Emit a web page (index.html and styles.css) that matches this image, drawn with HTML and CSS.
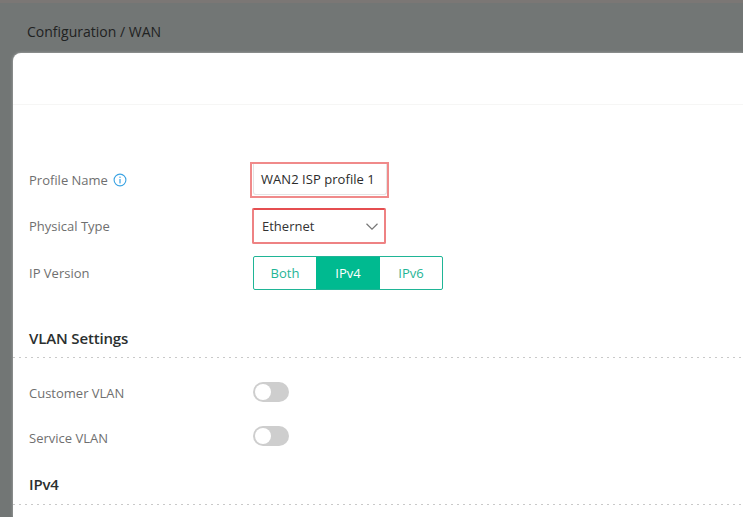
FILE: index.html
```html
<!DOCTYPE html>
<html lang="en">
<head>
<meta charset="utf-8">
<title>Configuration / WAN</title>
<link rel="stylesheet" href="styles.css">
</head>
<body>
<div class="topstrip"></div>
<div class="crumb">Configuration / WAN</div>
<main class="card">
  <div class="card-head"></div>
  <form class="form">
    <div class="row row-name">
      <div class="label">Profile Name
        <svg class="info" width="14" height="14" viewBox="0 0 14 14"><circle cx="7" cy="7" r="5.9" fill="none" stroke="#3aa3e3" stroke-width="1.1"/><rect x="6.4" y="6" width="1.2" height="4.4" fill="#3aa3e3"/><rect x="6.4" y="3.6" width="1.2" height="1.3" fill="#3aa3e3"/></svg>
      </div>
      <div class="err err-input"><div class="input">WAN2 ISP profile 1</div></div>
    </div>
    <div class="row row-type">
      <div class="label">Physical Type</div>
      <div class="err err-select">
        <span>Ethernet</span>
        <svg class="chev" width="12" height="7" viewBox="0 0 12 7"><path d="M.5.8l5.5 5.4L11.500.8" fill="none" stroke="#777" stroke-width="1.2"/></svg>
      </div>
    </div>
    <div class="row row-ip">
      <div class="label">IP Version</div>
      <div class="seg">
        <div class="seg-item">Both</div>
        <div class="seg-item active">IPv4</div>
        <div class="seg-item">IPv6</div>
      </div>
    </div>
    <h2 class="section section-vlan">VLAN Settings</h2>
    <div class="row row-toggle first">
      <div class="label">Customer VLAN</div>
      <div class="toggle"><i></i></div>
    </div>
    <div class="row row-toggle second">
      <div class="label">Service VLAN</div>
      <div class="toggle"><i></i></div>
    </div>
    <h2 class="section section-ip">IPv4</h2>
  </form>
</main>
</body>
</html>
```
FILE: styles.css
```css
* { box-sizing: border-box; }
html, body { margin: 0; height: 517px; overflow: hidden; }
body {
  background: #727675;
  font-family: "Open Sans", "Liberation Sans", sans-serif;
  color: #333;
  display: flex;
  flex-direction: column;
}
.topstrip { height: 3px; background: #7b7775; flex: none; }
.crumb {
  height: 50px;
  padding: 19px 0 0 27px;
  font-size: 14px;
  line-height: 20px;
  color: #1f2222;
  flex: none;
}
.card {
  flex: 1;
  margin-left: 13px;
  background: #fff;
  border-top-left-radius: 8px;
  box-shadow: 0 0 3px rgba(255,255,255,.45);
}
.card-head { height: 52px; border-bottom: 1px solid #f6f6f5; }
.form { padding: 57px 0 0 16px; }
.row { display: flex; align-items: center; }
.label {
  width: 224px;
  flex: none;
  font-size: 13px;
  line-height: 18px;
  color: #6f6f6f;
  display: flex;
  align-items: center;
  gap: 5px;
}
.info { display: block; }
.row-name { height: 36px; }
.row-name .label { width: 221px; padding-bottom: 1px; }
.err-input {
  width: 139px;
  height: 36px;
  border: 2px solid #f08a8a;
  padding: 0 0 0 1px;
}
.input {
  width: 134px;
  height: 31px;
  border: 1px solid #e4e4e4;
  border-top: 0;
  border-radius: 0 0 3px 3px;
  padding: 2px 0 0 7px;
  font-size: 13px;
  line-height: 26px;
  color: #2b2b2b;
  letter-spacing: .05px;
}
.row-type { height: 36px; margin-top: 10px; }
.row-type .label { width: 223px; }
.err-select {
  width: 134px;
  height: 36px;
  border: 2px solid #ee8283;
  border-top-color: #e54e50;
  border-radius: 2px;
  display: flex;
  align-items: center;
  justify-content: space-between;
  padding: 0 6px 0 8px;
  font-size: 13px;
  color: #333;
}
.row-ip { height: 34px; margin-top: 12px; }
.seg {
  width: 190px;
  height: 34px;
  display: flex;
  border: 1px solid #1fb596;
  border-radius: 2px;
}
.seg-item {
  width: 62px;
  display: flex;
  align-items: center;
  justify-content: center;
  font-size: 13px;
  color: #1fb596;
}
.seg-item.active { width: 64px; background: #00ba90; color: #fff; }
.section {
  margin: 0 0 0 -16px;
  padding: 0 0 0 16px;
  font-size: 15px;
  line-height: 20px;
  font-weight: 600;
  letter-spacing: -.15px;
  color: #2b2f2f;
  background: repeating-linear-gradient(90deg, #c9c9c9 0 2px, transparent 2px 6px) left bottom / 100% 1px no-repeat;
}
.section-vlan { margin-top: 38px; height: 30px; }
.row-toggle { height: 20px; }
.row-toggle.first { margin-top: 24px; }
.row-toggle.second { margin-top: 24px; }
.row-toggle .label { padding-top: 2px; }
.row-toggle.second .label { padding-top: 4px; }
.toggle {
  width: 36px;
  height: 20px;
  border-radius: 10px;
  background: #cecece;
  padding: 2px;
}
.toggle i { display: block; width: 16px; height: 16px; border-radius: 50%; background: #fff; }
.section-ip { margin-top: 28px; height: 31px; }
```
